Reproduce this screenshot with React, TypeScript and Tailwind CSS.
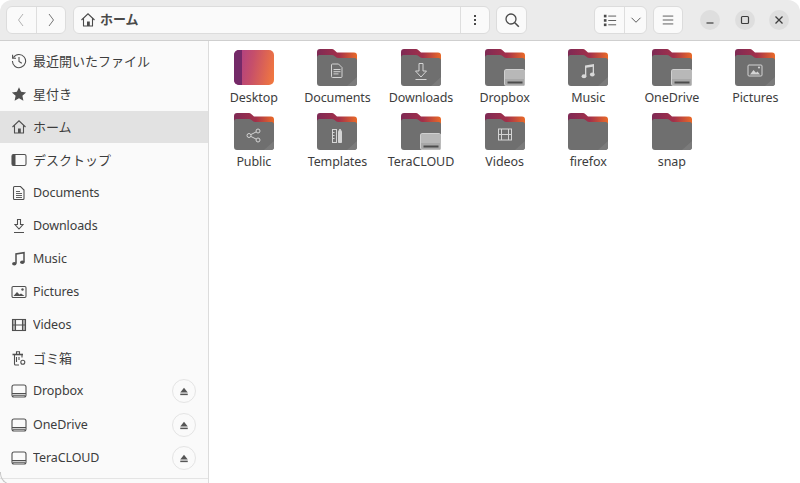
import type { ReactNode } from "react";

const stroke = { fill: "none", stroke: "currentColor", strokeWidth: 1.1 };

function Ico({ children, size = 16 }: { children: ReactNode; size?: number }) {
  return (
    <svg width={size} height={size} viewBox="0 0 16 16" className="shrink-0">
      {children}
    </svg>
  );
}

const HomeIcon = () => (
  <Ico>
    <path d="M1.500 8 8 1.800 14.500 8M3.500 6.500V14h9V6.500" {...stroke} />
    <path d="M7 14V9.500h2.800V14z" fill="currentColor" />
  </Ico>
);
const RecentIcon = () => (
  <Ico>
    <path d="M2.400 4.600A6.600 6.600 0 1 1 1.400 8" {...stroke} />
    <path d="M1.600 1.800v3.400H5" {...stroke} />
    <path d="M8 4v4.400l2.800 1.800" {...stroke} />
  </Ico>
);
const StarIcon = () => (
  <Ico>
    <path d="m8 1.200 2.100 4.600 5 .6-3.700 3.400 1 4.900L8 12.300l-4.400 2.400 1-4.900L.9 6.400l5-.6z" fill="currentColor" />
  </Ico>
);
const DesktopIcon = () => (
  <Ico>
    <rect x="1" y="2.500" width="14" height="11" rx="1.500" {...stroke} />
    <path d="M1 4a1.500 1.500 0 0 1 1.500-1.500H4.500v11H2.500A1.500 1.500 0 0 1 1 12z" fill="currentColor" />
  </Ico>
);
const DocumentIcon = () => (
  <Ico>
    <path d="M3.500 1.500h6l3.500 3.500v8.500a1 1 0 0 1-1 1H3.500a1 1 0 0 1-1-1v-11a1 1 0 0 1 1-1z" {...stroke} />
    <path d="M5 6.500h4M5 8.500h6M5 10.500h6M5 12.500h6" {...stroke} strokeWidth={0.9} />
  </Ico>
);
const DownloadIcon = () => (
  <Ico>
    <path d="M6.500 1.500h3v5h2.500L8 11 4 6.500h2.500z" {...stroke} />
    <path d="M3 14.500h10" {...stroke} />
  </Ico>
);
const MusicIcon = () => (
  <Ico>
    <path d="M5 12.500V3l8-1.300V11" {...stroke} strokeWidth={1.5} />
    <ellipse cx="3.300" cy="12.700" rx="2.200" ry="1.800" fill="currentColor" />
    <ellipse cx="11.300" cy="11.300" rx="2.200" ry="1.800" fill="currentColor" />
  </Ico>
);
const PictureIcon = () => (
  <Ico>
    <rect x="1" y="2.500" width="14" height="11" rx="1.200" {...stroke} />
    <path d="m2.500 12 3.500-4 2.500 2.500 1.500-1 3.500 2.500z" fill="currentColor" />
    <circle cx="11.500" cy="5.500" r="1.200" fill="currentColor" />
  </Ico>
);
const VideoIcon = () => (
  <Ico>
    <rect x="1.500" y="2.500" width="13" height="11" {...stroke} />
    <path d="M1.500 8h13M4.500 2.500v11M11.500 2.500v11" {...stroke} />
    <path d="M1.500 2.500h3v11h-3zM11.500 2.500h3v11h-3z" fill="currentColor" opacity="0.45" />
  </Ico>
);
const TrashIcon = () => (
  <Ico>
    <path d="M3.500 4.500V14a1 1 0 0 0 1 1H8M11 4.500v3" {...stroke} />
    <path d="M5.500 4V1.800h3V4" {...stroke} />
    <path d="M5.500 7v5M8 7v3" {...stroke} />
    <circle cx="11.800" cy="12.300" r="2" {...stroke} />
    <path d="M1.500 4.500h10.500" stroke="currentColor" strokeWidth="1.600" />
  </Ico>
);
const DriveIcon = () => (
  <Ico>
    <rect x="1" y="2" width="14" height="12" rx="2" {...stroke} />
    <path d="M1 10.500h14M2 12.200h12" {...stroke} />
  </Ico>
);
const EjectIcon = () => (
  <Ico size={12}>
    <path d="M8 3.500 13 10H3z" fill="currentColor" />
    <rect x="3" y="11.500" width="10" height="2" fill="currentColor" />
  </Ico>
);

function SidebarRow({ icon, label, active, eject }: { icon: ReactNode; label: string; active?: boolean; eject?: boolean }) {
  // Latin labels run a little narrower than the kana ones in the reference font
  const latin = /^[A-Za-z]+$/.test(label);
  return (
    <div className={`flex items-center pl-[11px] pr-[12px] text-[#3d3d3d] ${active ? "my-[0.550px] h-[32px] bg-[#e2e2e2]" : "h-[33.100px]"}`}>
      <span className="mr-[6px] flex w-[16px] justify-center text-[#505050]">{icon}</span>
      <span className={`flex-1 truncate leading-[18px] ${latin ? "text-[12.500px] tracking-[-0.1px]" : "text-[13px]"}`}>{label}</span>
      {eject && (
        <span className="flex h-[24px] w-[24px] items-center justify-center rounded-full border border-[#e4e4e4] text-[#555555]">
          <EjectIcon />
        </span>
      )}
    </div>
  );
}

const glyphs: Record<string, ReactNode> = {
  doc: (
    <g fill="none" stroke="#d4d4d4" strokeWidth="1" transform="translate(0 -1.500)">
      <path d="M15.500 16.500h6l3.500 3.500v9a1 1 0 0 1-1 1h-8.500a1 1 0 0 1-1-1v-11.500a1 1 0 0 1 1-1z" />
      <path d="M16.500 22h7M16.500 24.200h7M16.500 26.400h5" />
    </g>
  ),
  download: (
    <g fill="none" stroke="#d4d4d4" strokeWidth="1">
      <path d="M18 14.500h4v7.500h3.500L20 28l-5.500-6H18z" />
      <path d="M14.500 30.500h11" />
    </g>
  ),
  music: (
    <g fill="#d8d8d8" transform="translate(0.500 -1)">
      <path d="M16.500 28V17.500l9-1.500V26h-1.300v-7.300l-6.400 1V28z" />
      <ellipse cx="15.500" cy="28.300" rx="2.400" ry="2" />
      <ellipse cx="23.800" cy="26.500" rx="2.400" ry="2" />
    </g>
  ),
  picture: (
    <g transform="translate(0 -1)">
      <rect x="13" y="17" width="14" height="11" rx="1" fill="none" stroke="#d4d4d4" />
      <path d="m15 26.500 3.500-4.500 2.500 2.700 1.500-1.200 2.500 3z" fill="#d4d4d4" />
      <circle cx="24" cy="19.500" r="1.100" fill="#d4d4d4" />
    </g>
  ),
  share: (
    <g fill="none" stroke="#d4d4d4" strokeWidth="1">
      <circle cx="15" cy="22.500" r="2" />
      <circle cx="24" cy="18" r="2" />
      <circle cx="24" cy="27" r="2" />
      <path d="m16.800 21.600 5.400-2.700M16.800 23.400l5.400 2.700" />
    </g>
  ),
  template: (
    <g fill="none" stroke="#d4d4d4" strokeWidth="1">
      <rect x="15.500" y="16.500" width="4" height="13" />
      <path d="M15.500 19.500h2M15.500 22.500h2M15.500 25.500h2" />
      <path d="M21.500 18.500 23 16l1.500 2.500v11h-3z" fill="#d4d4d4" />
    </g>
  ),
  video: (
    <g fill="none" stroke="#d4d4d4" strokeWidth="1" transform="translate(0 -1)">
      <rect x="13.500" y="17" width="13" height="11" />
      <path d="M16.500 17v11M23.500 17v11M16.500 22.500h7M13.500 22.500h3M23.500 22.500h3" />
    </g>
  ),
  drive: (
    <g>
      <rect x="19" y="20" width="21" height="17" rx="2.500" fill="#d0d0d0" />
      <rect x="20" y="21" width="19.500" height="15.500" rx="2" fill="#a8a8a8" />
      <path d="M22 21h15.500a2 2 0 0 1 2 2v7H20v-7a2 2 0 0 1 2-2z" fill="#b8b8b8" />
      <rect x="22.500" y="32.500" width="15" height="2" fill="#4c4c4c" />
    </g>
  ),
};

function Folder({ kind }: { kind?: string }) {
  const id = kind ?? "plain";
  return (
    <svg width="40" height="37" viewBox="0 0 40 37">
      <defs>
        <linearGradient id={`back-${id}`} x1="0" x2="1" y1="0" y2="0">
          <stop offset="0" stopColor="#7e2a55" />
          <stop offset="0.55" stopColor="#a3304a" />
          <stop offset="1" stopColor="#ea6a28" />
        </linearGradient>
      </defs>
      <path d="M3 0h12a3 3 0 0 1 2.200 1L20 3.500h17a3 3 0 0 1 3 3V14H0V3a3 3 0 0 1 3-3z" fill={`url(#back-${id})`} />
      <path d="M2.500 6H15c1 0 1.800.4 2.500 1l2 1.500c.4.300.800.500 1.500.500h16.500a2.500 2.500 0 0 1 2.500 2.500v22.500a3 3 0 0 1-3 3H3a3 3 0 0 1-3-3V8.500A2.500 2.500 0 0 1 2.500 6z" fill="#6f6f6f" />
      <path d="M40 28v6a3 3 0 0 1-3 3h-7z" fill="#7b7b7b" />
      {kind && glyphs[kind]}
    </svg>
  );
}

function DesktopFolder() {
  return (
    <div className="mb-px mt-px h-[35px] w-[40px] overflow-hidden rounded-[5px] bg-[linear-gradient(100deg,#a83a8c_0%,#c64f6a_45%,#f47a3c_100%)]">
      <div className="h-full w-[8px] bg-[#742a68]" />
    </div>
  );
}

const items: { label: string; kind?: string; desktop?: boolean }[] = [
  { label: "Desktop", desktop: true },
  { label: "Documents", kind: "doc" },
  { label: "Downloads", kind: "download" },
  { label: "Dropbox", kind: "drive" },
  { label: "Music", kind: "music" },
  { label: "OneDrive", kind: "drive" },
  { label: "Pictures", kind: "picture" },
  { label: "Public", kind: "share" },
  { label: "Templates", kind: "template" },
  { label: "TeraCLOUD", kind: "drive" },
  { label: "Videos", kind: "video" },
  { label: "firefox" },
  { label: "snap" },
];

const btn = "flex h-[28px] items-center justify-center rounded-[6px] border border-[#dcdcdc] bg-[#fafafa] text-[#4a4a4a]";

export default function App() {
  return (
    <div
      className="relative flex h-[483px] w-[800px] flex-col overflow-hidden rounded-t-[12px] bg-[#fafafa] text-[#3d3d3d]"
      style={{ fontFamily: '"Noto Sans", "Noto Sans CJK JP", sans-serif' }}
    >
      <header className="flex h-[41px] shrink-0 items-center border-b border-[#cfcfcf] bg-[#ebebeb] pl-[6px] pr-[11px]">
        <div className={`${btn} w-[60px]`}>
          <span className="flex h-full flex-1 items-center justify-center border-r border-[#dedede] text-[#a8a8a8]">
            <svg width="16" height="16" viewBox="0 0 16 16"><path d="M10 2 5.500 8l4.500 6" {...stroke} strokeWidth={0.9} /></svg>
          </span>
          <span className="flex h-full flex-1 items-center justify-center text-[#666666]">
            <svg width="16" height="16" viewBox="0 0 16 16"><path d="m6 2 4.500 6L6 14" {...stroke} strokeWidth={0.9} /></svg>
          </span>
        </div>
        <div className={`${btn} ml-[7px] w-[417px] justify-start`}>
          <span className="ml-[6px] mr-[4px] flex"><HomeIcon /></span>
          <span className="flex-1 text-[13px] font-semibold">ホーム</span>
          <span className="flex h-full w-[29px] items-center justify-center border-l border-[#dedede]">
            <svg width="16" height="16" viewBox="0 0 16 16" fill="currentColor">
              <rect x="7" y="3" width="2" height="2" /><rect x="7" y="7" width="2" height="2" /><rect x="7" y="11" width="2" height="2" />
            </svg>
          </span>
        </div>
        <div className={`${btn} ml-[6px] w-[31px]`}>
          <svg width="16" height="16" viewBox="0 0 16 16"><circle cx="7" cy="7" r="5" {...stroke} strokeWidth={1.3} /><path d="m10.800 10.800 4 4" {...stroke} strokeWidth={1.6} /></svg>
        </div>
        <div className="flex-1" />
        <div className={`${btn} w-[53px]`}>
          <span className="flex h-full w-[30px] items-center justify-center border-r border-[#dedede]">
            <svg width="14" height="14" viewBox="0 0 16 16" fill="currentColor">
              <rect x="1" y="2" width="3" height="3" /><rect x="1" y="7" width="3" height="3" /><rect x="1" y="12" width="3" height="3" />
              <rect x="6" y="3" width="9" height="1" /><rect x="6" y="8" width="9" height="1" /><rect x="6" y="13" width="9" height="1" />
            </svg>
          </span>
          <span className="flex h-full flex-1 items-center justify-center">
            <svg width="12" height="12" viewBox="0 0 16 16"><path d="m2 5 6 6 6-6" {...stroke} strokeWidth={1.2} /></svg>
          </span>
        </div>
        <div className={`${btn} ml-[6px] w-[30px]`}>
          <svg width="14" height="14" viewBox="0 0 16 16" fill="currentColor">
            <rect x="2" y="3" width="12" height="1" /><rect x="2" y="7.500" width="12" height="1" /><rect x="2" y="12" width="12" height="1" />
          </svg>
        </div>
        <div className="ml-[17px] flex items-center gap-[14.500px]">
          {[
            <path key="min" d="M4.500 11h7" {...stroke} strokeWidth={1.2} />,
            <rect key="max" x="4.500" y="4.500" width="7" height="7" rx="1" {...stroke} strokeWidth={1.2} />,
            <path key="close" d="m4.500 4.500 7 7m0-7-7 7" {...stroke} strokeWidth={1.3} />,
          ].map((glyph) => (
            <span key={glyph.key} className="flex h-[20px] w-[20px] items-center justify-center rounded-full bg-[#dedede] text-[#3d3d3d]">
              <svg width="16" height="16" viewBox="0 0 16 16">{glyph}</svg>
            </span>
          ))}
        </div>
      </header>

      <div className="flex min-h-0 flex-1">
        <aside className="flex w-[209px] shrink-0 flex-col border-r border-[#dcdcdc] bg-[#fafafa]">
          <nav className="flex-1 pt-[3px]">
            <SidebarRow icon={<RecentIcon />} label="最近開いたファイル" />
            <SidebarRow icon={<StarIcon />} label="星付き" />
            <SidebarRow icon={<HomeIcon />} label="ホーム" active />
            <SidebarRow icon={<DesktopIcon />} label="デスクトップ" />
            <SidebarRow icon={<DocumentIcon />} label="Documents" />
            <SidebarRow icon={<DownloadIcon />} label="Downloads" />
            <SidebarRow icon={<MusicIcon />} label="Music" />
            <SidebarRow icon={<PictureIcon />} label="Pictures" />
            <SidebarRow icon={<VideoIcon />} label="Videos" />
            <SidebarRow icon={<TrashIcon />} label="ゴミ箱" />
            <SidebarRow icon={<DriveIcon />} label="Dropbox" eject />
            <SidebarRow icon={<DriveIcon />} label="OneDrive" eject />
            <SidebarRow icon={<DriveIcon />} label="TeraCLOUD" eject />
          </nav>
          <div className="h-[5px] border-t border-[#e4e4e4]" />
        </aside>
        <main className="flex-1 bg-white pl-[3px] pt-[8px]">
          <div className="grid grid-cols-[repeat(7,83.600px)] auto-rows-[64px]">
            {items.map((item) => (
              <div key={item.label} className="flex flex-col items-center">
                {item.desktop ? <DesktopFolder /> : <Folder kind={item.kind} />}
                <span className="mt-[3px] whitespace-nowrap text-[12.500px] leading-[18px] tracking-[-0.1px] text-[#3d3d3d]">{item.label}</span>
              </div>
            ))}
          </div>
        </main>
      </div>
      {/* window corner peeking in at the bottom left */}
      <div className="absolute bottom-[-2px] left-0 h-[13px] w-[12px] rounded-bl-[12px] border-b border-l border-[#c8c8c8]" />
    </div>
  );
}
